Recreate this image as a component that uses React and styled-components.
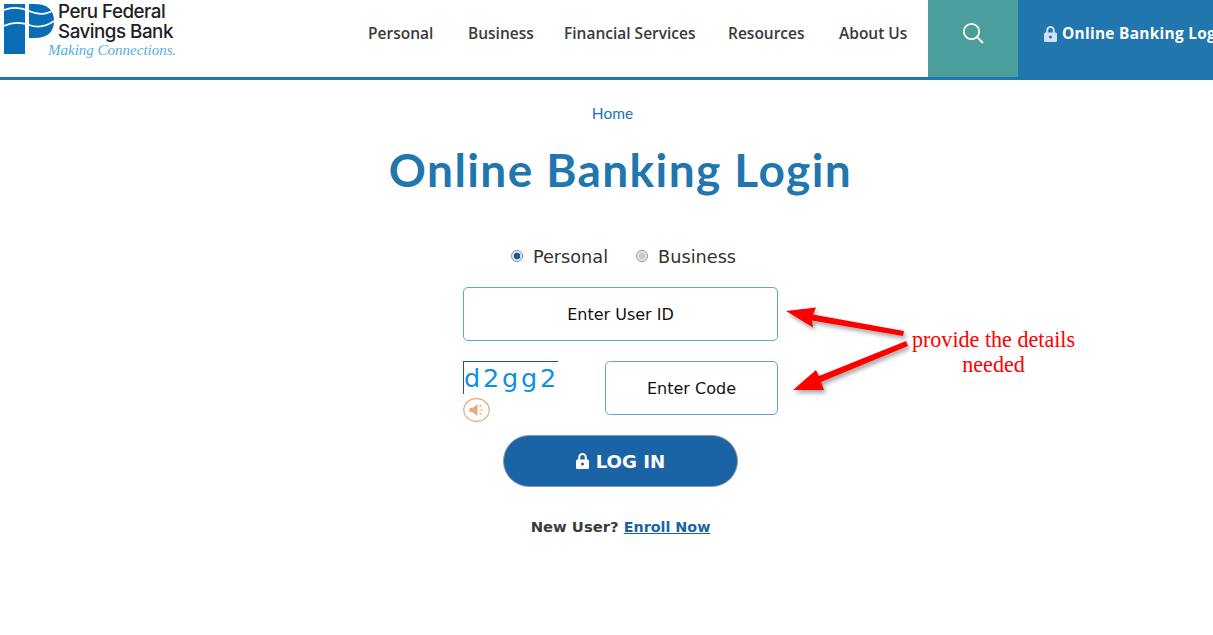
import React from "react";
import styled, { createGlobalStyle } from "styled-components";

const Global = createGlobalStyle`
  html, body { margin: 0; padding: 0; background: #fff; overflow: hidden; }
  * { box-sizing: border-box; }
`;
const Page = styled.div`
  position: relative; width: 1213px; height: 635px; overflow: hidden;
  font-family: "Lato", "Liberation Sans", sans-serif;
`;
const Header = styled.header`
  display: flex; height: 80px; border-bottom: 3px solid #2176ae; align-items: stretch;
`;
const Brand = styled.div`
  display: flex; width: 368px; flex: none; padding: 4px 0 0 4px; gap: 4px; align-items: flex-start;
`;
const BrandMark = styled.svg`width: 50px; height: 51px; flex: none;`;
const BrandText = styled.div`display: flex; flex-direction: column;`;
const BrandName = styled.div`
  font-family: "Inter", "Liberation Sans", sans-serif; font-size: 18.8px; line-height: 19.5px;
  font-weight: 500; color: #1f2126; letter-spacing: -0.5px; margin-top: -2px; white-space: nowrap;
`;
const Tagline = styled.div`
  font-family: "Liberation Serif", serif; font-style: italic; font-size: 15px; line-height: 18px;
  color: #55ade0; margin-left: -10px; margin-top: 0; white-space: nowrap;
`;
const Nav = styled.nav`display: flex; width: 560px; flex: none; align-items: center; height: 65px;`;
const NavItem = styled.a`
  font-family: "Open Sans", sans-serif; font-size: 15.5px; font-weight: 600; color: #3a3a3a;
  white-space: nowrap; width: ${p => p.$w}px;
`;
const SearchTile = styled.div`
  width: 90px; flex: none; height: 77px; background: #4a9f9c; display: flex; align-items: center; justify-content: center;
  padding-bottom: 11px;
`;
const LoginTile = styled.div`
  flex: 1; height: 77px; background: #2176ae; color: #fff; display: flex; align-items: center;
  padding: 0 0 10px 26px; gap: 5px; overflow: hidden; white-space: nowrap;
  font-family: "Open Sans", sans-serif; font-weight: 700; font-size: 15.4px; letter-spacing: 0.3px;
`;
const Main = styled.main`
  display: flex; flex-direction: column; align-items: center; width: 1225px;
`;
const Crumb = styled.a`
  font-family: "Lato", sans-serif; font-size: 15.5px; color: #2176ae; margin-top: 23px; line-height: 20px;
`;
const Title = styled.h1`
  margin: 19px 0 0 16px; font-family: "Lato", sans-serif; font-weight: 700; font-size: 46px; line-height: 56px;
  color: #2176ae; letter-spacing: 1.4px; white-space: nowrap; text-align: center;
`;
const Form = styled.form`
  width: 315px; margin: 46px 0 0 16px; display: flex; flex-direction: column;
  font-family: "DejaVu Sans", sans-serif;
`;
const RadioRow = styled.div`
  display: flex; justify-content: center; align-items: center; height: 24px; color: #333; font-size: 17.7px;
  padding: 2px 0 0 6px;
`;
const RadioDot = styled.span`
  width: 12px; height: 12px; border-radius: 50%; border: 1px solid #8f8f8f; margin-right: 10px; margin-top: -2px;
  background: ${p => p.$on ? "radial-gradient(circle, #15598f 0 3px, #dfe8ef 3.6px)" : "radial-gradient(circle, #c9c9c9 0 3px, #efefef 4px)"};
`;
const RadioLabel = styled.label`margin-right: ${p => p.$gap}px; white-space: nowrap;`;
const Field = styled.div`
  height: 54px; width: ${p => p.$w || 315}px; flex: none; border: 1px solid #5ba7da; border-radius: 5px;
  display: flex; align-items: center; justify-content: center; color: #111; font-size: 16px; white-space: nowrap;
`;
const UserField = styled(Field)`margin-top: 19px;`;
const CodeRow = styled.div`display: flex; justify-content: space-between; margin-top: 20px; height: 54px;`;
const Captcha = styled.div`display: flex; flex-direction: column;`;
const CaptchaText = styled.div`
  width: 95px; height: 33px; flex: none; border-top: 1px solid #1d5a7a; border-left: 1px solid #1d5a7a;
  color: #0f8fe0; font-size: 25.5px; line-height: 32px; letter-spacing: 2.8px; white-space: nowrap;
  font-family: "DejaVu Sans", sans-serif;
`;
const Sound = styled.svg`width: 27px; height: 24px; flex: none; margin-top: 4px;`;
const LoginBtn = styled.button`
  align-self: center; margin-top: 20px; width: 235px; height: 52px; border-radius: 26px; border: 1px solid #8a9ba8;
  background: #1a64a5; color: #fff; font-family: "DejaVu Sans", sans-serif; font-weight: 700; font-size: 18.2px;
  display: flex; align-items: center; justify-content: center; gap: 7px; padding: 0;
`;
const Signup = styled.div`
  text-align: center; margin-top: 30px; font-size: 14.8px; font-weight: 700; color: #3a3a3a; line-height: 20px; white-space: nowrap;
`;
const Enroll = styled.a`color: #1a64a5; text-decoration: underline; font-size: 14.3px;`;
const Arrows = styled.svg`position: absolute; left: 770px; top: 295px; width: 160px; height: 110px; pointer-events: none;`;
const Note = styled.div`
  position: absolute; left: 894px; top: 327px; width: 199px; text-align: center; color: #f00;
  font-family: "Liberation Serif", serif; font-size: 22.1px; line-height: 25px;
`;

const Lock = ({ color = "#fff", hole = "#2176ae" }) => (
  <svg width="13" height="16" viewBox="0 0 13 16" aria-hidden="true" style={{ flex: "none" }}>
    <path d="M3.2 7V4.4a3.3 3.3 0 0 1 6.6 0V7" fill="none" stroke={color} strokeWidth="2" />
    <rect x="0" y="6.5" width="13" height="9.5" rx="1.5" fill={color} />
    <circle cx="6.5" cy="11" r="1.5" fill={hole} />
  </svg>
);

export default function App() {
  return (
    <Page>
      <Global />
      <Header>
        <Brand>
          <BrandMark viewBox="0 0 50 51">
            <rect x="0" y="0" width="21" height="50" fill="#0a6cb5" />
            <path d="M25 0h6c11 0 19 5 19 17s-8 17-19 17h-6z" fill="#0a6cb5" />
            <path d="M0 6C8 3 16 3 25 7s17 4 25-1M0 22c8-4 16-4 25-1s17 2 25-4" fill="none" stroke="#fff" strokeWidth="1.7" />
            <rect x="21" y="0" width="4" height="51" fill="#fff" />
          </BrandMark>
          <BrandText>
            <BrandName>Peru Federal<br />Savings Bank</BrandName>
            <Tagline>Making Connections.</Tagline>
          </BrandText>
        </Brand>
        <Nav>
          <NavItem $w={100}>Personal</NavItem>
          <NavItem $w={96}>Business</NavItem>
          <NavItem $w={164}>Financial Services</NavItem>
          <NavItem $w={111}>Resources</NavItem>
          <NavItem $w={89}>About Us</NavItem>
        </Nav>
        <SearchTile>
          <svg width="22" height="22" viewBox="0 0 22 22" fill="none" stroke="#fff" strokeWidth="1.8">
            <circle cx="9.5" cy="9.5" r="7.7" />
            <path d="M15 15l6 6" />
          </svg>
        </SearchTile>
        <LoginTile><Lock color="#cfe2f1" />Online Banking Login</LoginTile>
      </Header>
      <Main>
        <Crumb>Home</Crumb>
        <Title>Online Banking Login</Title>
        <Form>
          <RadioRow>
            <RadioDot $on />
            <RadioLabel $gap={28}>Personal</RadioLabel>
            <RadioDot />
            <RadioLabel $gap={0}>Business</RadioLabel>
          </RadioRow>
          <UserField>Enter User ID</UserField>
          <CodeRow>
            <Captcha>
              <CaptchaText>d2gg2</CaptchaText>
              <Sound viewBox="0 0 27 24">
                <ellipse cx="13.5" cy="12" rx="12.7" ry="11.4" fill="#fff" stroke="#e8a878" strokeWidth="1.2" />
                <path d="M6.5 10h3l5-4v12l-5-4h-3z" fill="#e8a878" />
                <path d="M16.5 9l2-1.5M17 12h3M16.5 15l2 1.5" stroke="#e8a878" strokeWidth="1.2" />
              </Sound>
            </Captcha>
            <Field $w={173}>Enter Code</Field>
          </CodeRow>
          <LoginBtn type="button"><Lock hole="#1a64a5" />LOG IN</LoginBtn>
          <Signup>New User? <Enroll>Enroll Now</Enroll></Signup>
        </Form>
      </Main>
      <Arrows viewBox="0 0 160 110">
        <defs>
          <filter id="shadow" x="-20%" y="-30%" width="140%" height="170%">
            <feDropShadow dx="2" dy="3" stdDeviation="2" floodColor="#000" floodOpacity="0.35" />
          </filter>
        </defs>
        <g fill="#f00" filter="url(#shadow)">
          <path d="M134 36 L43 19.5 L46 12.5 L16 16 L43 32.5 L42 25.5 L133 41 Z" />
          <path d="M136 46 L49 81 L46 75 L23 95 L54 95 L51 87 L138 51 Z" />
        </g>
      </Arrows>
      <Note>provide the details<br />needed</Note>
    </Page>
  );
}
